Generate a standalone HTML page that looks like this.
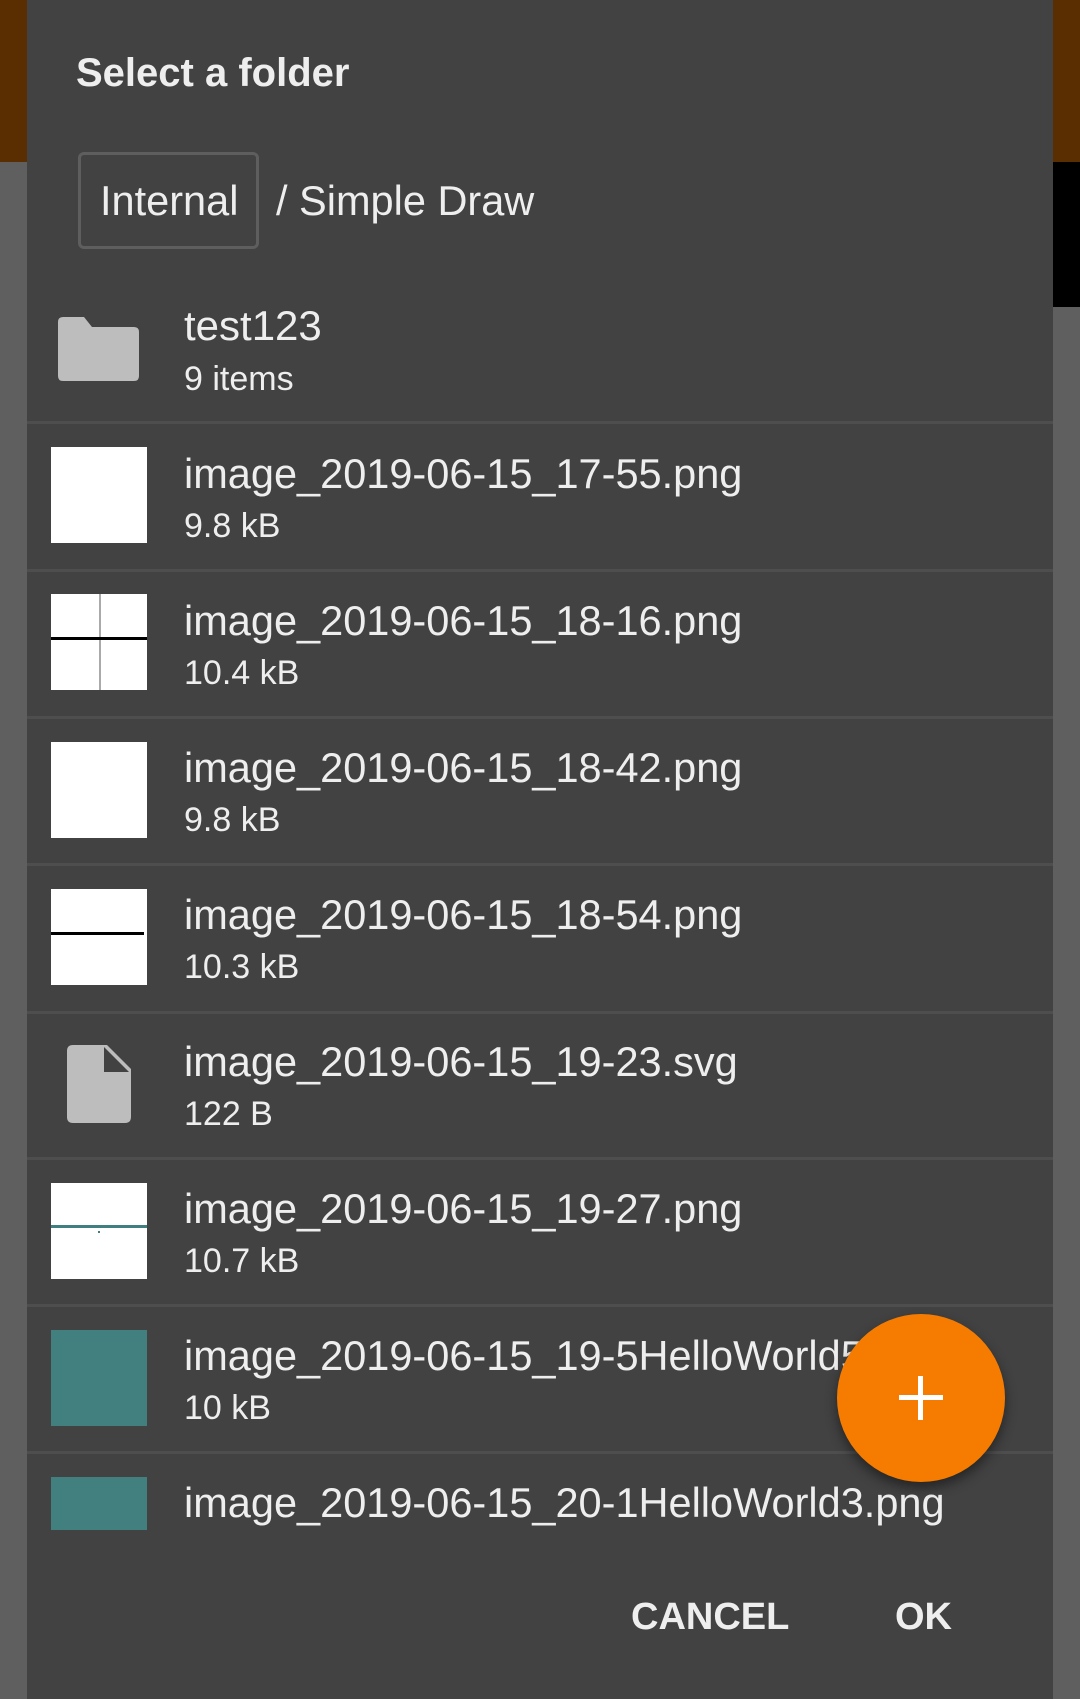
<!DOCTYPE html>
<html><head><meta charset="utf-8"><style>
*{margin:0;padding:0;box-sizing:border-box}
body{width:1080px;height:1699px;position:relative;overflow:hidden;background:#5f5f5f;font-family:"Liberation Sans",Roboto,sans-serif;color:#eeeeee}
.a{position:absolute}
.dlg{left:27px;top:0;width:1026px;height:1699px;background:#424242}
.sep{position:absolute;left:27px;width:1026px;height:3px;background:#4e4e4e}
.t{position:absolute;left:184px;font-size:41.5px;line-height:44px;white-space:nowrap}
.s{position:absolute;left:184px;font-size:34px;line-height:36px;white-space:nowrap}
.th{position:absolute;left:51px;width:96px;height:96px;background:#fff;overflow:hidden}
</style></head><body>
<div class="a" style="left:0;top:0;width:27px;height:162px;background:#5a2e00"></div>
<div class="a" style="left:1053px;top:0;width:27px;height:162px;background:#5a2e00"></div>
<div class="a" style="left:1053px;top:162px;width:27px;height:145px;background:#000"></div>
<div class="a dlg"></div>
<div class="a" style="left:76px;top:50px;font-size:40px;font-weight:bold;line-height:46px">Select a folder</div>
<div class="a" style="left:78px;top:152px;width:181px;height:97px;border:3px solid #5e5e5e;border-radius:6px"></div>
<div class="a" style="left:100px;top:178px;font-size:41.5px;line-height:46px">Internal</div>
<div class="a" style="left:276px;top:178px;font-size:41.5px;line-height:46px">/ Simple Draw</div>

<svg class="a" style="left:58px;top:317px" width="81" height="64" viewBox="0 0 81 64"><path d="M5 0H26L34 10H76Q81 10 81 15V59Q81 64 76 64H5Q0 64 0 59V5Q0 0 5 0Z" fill="#bdbdbd"/></svg>
<div class="t" style="top:304px;font-size:42px">test123</div>
<div class="s" style="top:361px">9 items</div>

<div class="sep" style="top:421px"></div>
<div class="th" style="top:447px"></div>
<div class="t" style="top:452px">image_2019-06-15_17-55.png</div>
<div class="s" style="top:508px">9.8 kB</div>

<div class="sep" style="top:569px"></div>
<div class="th" style="top:594px"><div class="a" style="left:48px;top:0;width:2px;height:96px;background:#aaa"></div><div class="a" style="left:0;top:43px;width:96px;height:3px;background:#000"></div></div>
<div class="t" style="top:599px">image_2019-06-15_18-16.png</div>
<div class="s" style="top:655px">10.4 kB</div>

<div class="sep" style="top:716px"></div>
<div class="th" style="top:742px"></div>
<div class="t" style="top:746px">image_2019-06-15_18-42.png</div>
<div class="s" style="top:802px">9.8 kB</div>

<div class="sep" style="top:863px"></div>
<div class="th" style="top:889px"><div class="a" style="left:0;top:43px;width:93px;height:3px;background:#000"></div></div>
<div class="t" style="top:893px">image_2019-06-15_18-54.png</div>
<div class="s" style="top:949px">10.3 kB</div>

<div class="sep" style="top:1011px"></div>
<svg class="a" style="left:67px;top:1045px" width="64" height="78" viewBox="0 0 64 78"><path d="M6 0H40L64 24V72Q64 78 58 78H6Q0 78 0 72V6Q0 0 6 0Z" fill="#bdbdbd"/><path d="M37 2V27H62Z" fill="#424242"/></svg>
<div class="t" style="top:1040px">image_2019-06-15_19-23.svg</div>
<div class="s" style="top:1096px">122 B</div>

<div class="sep" style="top:1157px"></div>
<div class="th" style="top:1183px"><div class="a" style="left:0;top:42px;width:96px;height:3px;background:#3f7f7f"></div><div class="a" style="left:47px;top:48px;width:2px;height:2px;background:#3f7f7f"></div></div>
<div class="t" style="top:1187px">image_2019-06-15_19-27.png</div>
<div class="s" style="top:1243px">10.7 kB</div>

<div class="sep" style="top:1304px"></div>
<div class="th" style="top:1330px;background:#41807e"></div>
<div class="t" style="top:1334px">image_2019-06-15_19-5HelloWorld5.png</div>
<div class="s" style="top:1390px">10 kB</div>

<div class="sep" style="top:1451px"></div>
<div class="th" style="top:1477px;height:53px;background:#41807e"></div>
<div class="t" style="top:1481px">image_2019-06-15_20-1HelloWorld3.png</div>
<div class="a" style="left:27px;top:1532px;width:1026px;height:167px;background:#424242"></div>

<div class="a" style="left:837px;top:1314px;width:168px;height:168px;border-radius:50%;background:#f57c00;box-shadow:0 6px 12px rgba(0,0,0,.45)"></div>
<div class="a" style="left:899px;top:1395px;width:44px;height:5px;background:#fff"></div>
<div class="a" style="left:918px;top:1376px;width:5px;height:44px;background:#fff"></div>

<div class="a" style="left:631px;top:1594px;font-size:38px;font-weight:bold;line-height:46px">CANCEL</div>
<div class="a" style="left:895px;top:1594px;font-size:38px;font-weight:bold;line-height:46px">OK</div>
</body></html>
